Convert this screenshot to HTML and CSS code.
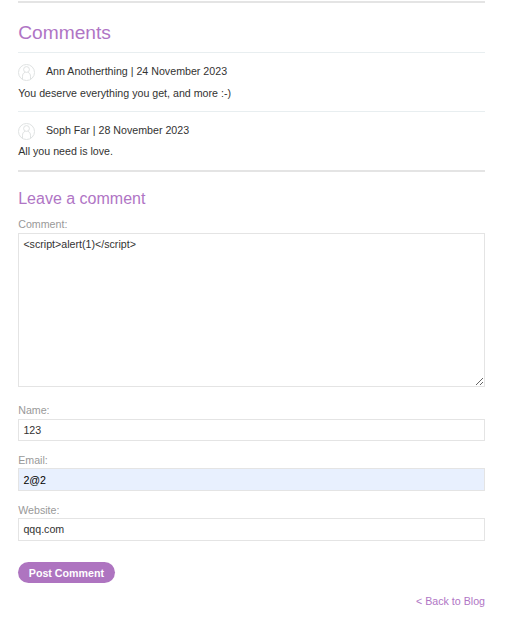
FILE: index.html
```html
<!DOCTYPE html>
<html lang="en">
<head>
<meta charset="utf-8">
<title>Comments</title>
<link rel="stylesheet" href="styles.css">
</head>
<body>
<main class="page">
  <hr class="rule">
  <h1 class="title">Comments</h1>
  <section class="comment">
    <p class="meta">
      <svg class="avatar" viewBox="0 0 17 17"><circle cx="8.5" cy="8.5" r="8"/><circle cx="8.5" cy="5.5" r="2.9"/><path d="M4.5 15.5v-3.2c0-2 1-3.4 2.6-4M12.5 15.5v-3.2c0-2-1-3.4-2.6-4"/></svg>
      <span>Ann Anotherthing | 24 November 2023</span>
    </p>
    <p class="text">You deserve everything you get, and more :-)</p>
  </section>
  <section class="comment comment-last">
    <p class="meta">
      <svg class="avatar" viewBox="0 0 17 17"><circle cx="8.5" cy="8.5" r="8"/><circle cx="8.5" cy="5.5" r="2.9"/><path d="M4.5 15.5v-3.2c0-2 1-3.4 2.6-4M12.5 15.5v-3.2c0-2-1-3.4-2.6-4"/></svg>
      <span>Soph Far | 28 November 2023</span>
    </p>
    <p class="text">All you need is love.</p>
  </section>
  <hr class="rule">
  <form class="form">
    <h2 class="subtitle">Leave a comment</h2>
    <label class="label" for="comment">Comment:</label>
    <textarea class="field area" id="comment">&lt;script&gt;alert(1)&lt;/script&gt;</textarea>
    <label class="label" for="name">Name:</label>
    <input class="field name" id="name" value="123">
    <label class="label label-tight" for="email">Email:</label>
    <input class="field email" id="email" value="2@2">
    <label class="label label-tight" for="website">Website:</label>
    <input class="field website" id="website" value="qqq.com">
    <button class="button" type="button">Post Comment</button>
  </form>
  <a class="back">&lt; Back to Blog</a>
</main>
</body>
</html>
```
FILE: styles.css
```css
* { box-sizing: border-box; }
body {
  margin: 0;
  background: #fff;
  color: #333332;
  font: 10.67px/14px "Liberation Sans", Arial, sans-serif;
}
.page {
  display: flex;
  flex-direction: column;
  width: 466.8px;
  margin-left: 18.2px;
  padding-top: 1px;
}
.rule { width: 100%; height: 2px; margin: 0; border: 0; background: #e4e4e4; }
.title {
  height: 49px;
  margin: 0;
  padding-top: 18px;
  color: #b075c5;
  font-size: 19.2px;
  font-weight: normal;
  line-height: 24px;
}
.comment { height: 59px; border-top: 1px solid #e8eef0; }
.meta { display: flex; gap: 10.8px; height: 33px; margin: 0; padding-top: 11px; }
.avatar { width: 17px; height: 17px; fill: none; stroke: #dfe2e2; stroke-width: 1; }
.text { margin: 0; }
.comment-last .meta { height: 32px; }
.form { display: flex; flex-direction: column; height: 422px; }
.subtitle {
  margin: 0;
  padding-top: 17px;
  height: 45px;
  color: #b075c5;
  font-size: 16px;
  font-weight: normal;
  line-height: 20px;
}
.label { height: 16px; color: #999; }
.label-tight { height: 15px; }
.field {
  display: block;
  width: 100%;
  margin: 0;
  padding: 0 4.2px;
  border: 1px solid #e4e4e4;
  border-radius: 0;
  background: #fff;
  color: #333332;
  font: inherit;
  outline: 0;
}
.area { height: 154px; margin-bottom: 16px; padding-top: 3px; resize: both; }
.name { height: 22px; margin-bottom: 12px; }
.email { height: 23px; margin-bottom: 12px; background: #e8f0fe; color: #000; }
.website { height: 23px; margin-bottom: 21px; padding-bottom: 2px; }
.button {
  width: 97px;
  height: 21px;
  padding: 1px 0.6px 0 0;
  border: 0;
  border-radius: 11px;
  background: #ae74c0;
  color: #fff;
  font: bold 10.67px/20px "Liberation Sans", Arial, sans-serif;
}
.back { align-self: flex-end; color: #b075c5; }
```
